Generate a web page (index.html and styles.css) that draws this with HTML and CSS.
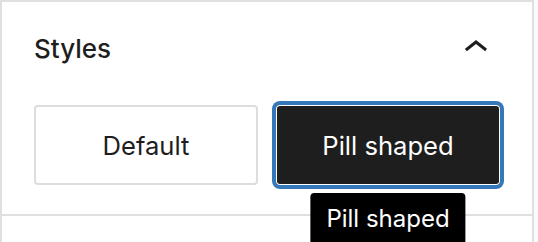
FILE: index.html
```html
<html lang="en">
<head>
  <meta charset="UTF-8" />
  <meta name="viewport" content="width=device-width, initial-scale=1.0" />
  <title>Styles panel</title>
  <link rel="stylesheet" href="styles.css">
</head>
<body>
  <div class="sidebar">
    <div class="panel">
      <div class="panel-header">
        <h2 class="panel-title">Styles</h2>
        <button class="toggle" aria-expanded="true">
          <svg viewBox="0 0 24 24" width="48" height="48">
            <path d="M6.5 12.4L12 8l5.5 4.4-.9 1.2L12 10l-4.6 3.6-1-1.2z" fill="#1e1e1e"></path>
          </svg>
        </button>
      </div>
      <div class="style-grid">
        <button class="style-option">Default</button>
        <div class="option-wrap">
          <button class="style-option active">Pill shaped</button>
          <div class="tooltip">Pill shaped</div>
        </div>
      </div>
    </div>
  </div>
</body>
</html>
```
FILE: styles.css
```css
:root {
  --text: #1e1e1e;
  --line: #e0e0e0;
  --accent: #3578b9;
}

body {
  margin: 0;
  font-family: 'Inter', 'Noto Sans', sans-serif;
  color: var(--text);
  background: #fbfbfb;
}

.sidebar {
  width: 534px;
  height: 100vh;
  box-sizing: border-box;
  background: #fff;
  border: 2px solid var(--line);
  border-bottom: none;
}

.panel {
  padding: 0 32px 29px;
  border-bottom: 2px solid var(--line);
}

.panel-header {
  display: flex;
  align-items: center;
  justify-content: space-between;
  height: 92px;
}

.panel-title {
  margin: 0;
  font-size: 26px;
  font-weight: 500;
}

.toggle {
  width: 48px;
  height: 48px;
  padding: 0;
  border: none;
  background: transparent;
  cursor: pointer;
}

.toggle svg {
  display: block;
}

.style-grid {
  display: grid;
  grid-template-columns: repeat(2, 1fr);
  gap: 18px;
  margin-top: 11px;
}

.option-wrap {
  position: relative;
}

.style-option {
  width: 100%;
  height: 80px;
  font-family: inherit;
  font-size: 25.6px;
  color: var(--text);
  background: #fff;
  border: 2px solid #dddddd;
  border-radius: 4px;
  cursor: pointer;
}

.style-option.active {
  background: #1e1e1e;
  color: #fff;
  border: none;
  box-shadow: inset 0 0 0 1px #fff, 0 0 0 4px var(--accent);
}

.tooltip {
  position: absolute;
  top: calc(100% + 8px);
  left: 50%;
  transform: translateX(-50%);
  padding: 8px 16px;
  line-height: 36px;
  font-size: 24px;
  white-space: nowrap;
  color: #fff;
  background: #000;
  border-radius: 4px;
}
```
